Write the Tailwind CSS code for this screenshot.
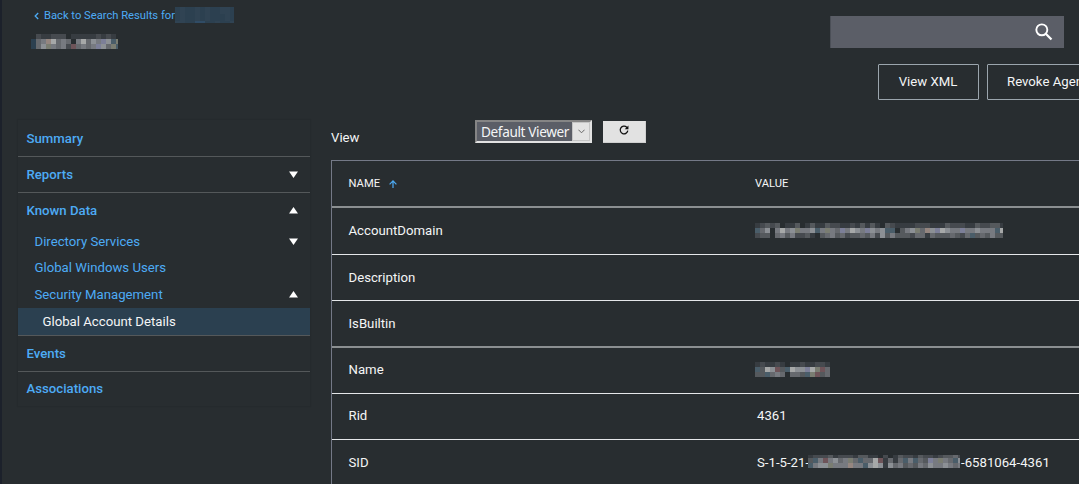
<!DOCTYPE html>
<html lang="en">
<head>
<meta charset="utf-8">
<title>Global Account Details</title>
<script src="https://cdn.jsdelivr.net/npm/@tailwindcss/browser@4"></script>
</head>
<body class="h-[484px] overflow-hidden border-l-2 border-[#1c212b] bg-[#282d30] font-['Roboto',sans-serif] text-[13.2px] leading-4 text-[#f4f5f6]">
<header class="flex h-[120px] justify-between">
  <div class="pt-[7px]">
    <div class="flex h-4 items-center pl-8 text-[11.2px] text-[#4dabf5]">
      <svg class="mt-0.5 mr-[5px] block h-2 w-[5px]" viewBox="0 0 5 8" fill="none" stroke="currentColor" stroke-width="1.3"><path d="M4.2 1 1.2 4l3 3"/></svg>
      <a class="w-[131px] pt-px whitespace-nowrap">Back to Search Results for</a>
      <svg class="block h-4 w-[59px]" data-cells="cdccdcdccddc/cdccdcdcccdc/ddcceeccdccd" data-sizes="7,7,2"></svg>
    </div>
    <svg class="mt-[11px] ml-[29px] block h-[15px] w-[87px]" data-cells="021122201111121210/c45o7454057465p6bgbr/c46g5452r4545p64gb6r" data-sizes="5,5,5"></svg>
  </div>
  <div class="flex w-[249px] flex-col pt-4">
    <div class="flex h-8 w-[234px] shrink-0 items-center justify-end border-l border-[#4b4f57] bg-[#5b5e67] pr-[11px]">
      <svg class="block size-[18px]" viewBox="0 0 19 19" fill="none" stroke="#fff" stroke-width="2"><circle cx="7.2" cy="7.2" r="5.8"/><path d="m11.4 11.4 6 6" stroke-width="2.4"/></svg>
    </div>
    <div class="mt-4 ml-12 flex gap-2 whitespace-nowrap">
      <button class="h-9 w-[101px] shrink-0 rounded-[1px] border border-[#9ba5ad] pr-px">View XML</button>
      <button class="h-9 w-[140px] shrink-0 rounded-[1px] border border-[#9ba5ad] pl-[19px] text-left">Revoke Agent</button>
    </div>
  </div>
</header>
<main class="flex h-[364px]">
  <nav class="ml-4 h-[286px] w-[292px] shrink-0 text-[#4dabf5] shadow-[0_0_1px_1px_rgba(0,0,0,0.06)]">
    <div class="flex h-[37px] items-center border-b border-[#54585a] px-[8.5px] pt-px font-medium">Summary</div>
    <div class="flex h-9 items-center justify-between border-b border-[#54585a] pr-3 pl-[8.5px] font-medium">Reports<svg class="mb-px h-[7px] w-[9px] text-white" viewBox="0 0 9 7" fill="currentColor"><path d="M0 .5h9L4.5 7z"/></svg></div>
    <div class="flex h-[35px] items-center justify-between pr-3 pl-[8.5px] font-medium">Known Data<svg class="h-[7px] w-[9px] text-white" viewBox="0 0 9 7" fill="currentColor"><path d="M0 6.5h9L4.5 0z"/></svg></div>
    <div class="flex h-[27px] items-center justify-between pr-3 pl-[16.5px]">Directory Services<svg class="mb-px h-[7px] w-[9px] text-white" viewBox="0 0 9 7" fill="currentColor"><path d="M0 .5h9L4.5 7z"/></svg></div>
    <div class="flex h-[26px] items-center pl-[16.5px]">Global Windows Users</div>
    <div class="flex h-[27px] items-center justify-between pr-3 pl-[16.5px]">Security Management<svg class="h-[7px] w-[9px] text-white" viewBox="0 0 9 7" fill="currentColor"><path d="M0 6.5h9L4.5 0z"/></svg></div>
    <div class="flex h-7 items-center border-b border-[#54585a] bg-[#2b4050] pl-[24.5px] text-[#f4f5f6]">Global Account Details</div>
    <div class="flex h-9 items-center border-b border-[#54585a] px-[8.5px] font-medium">Events</div>
    <div class="flex h-[34px] items-center px-[8.5px] font-medium">Associations</div>
  </nav>
  <section class="ml-[21px] min-w-0 flex-1">
    <div class="flex h-10">
      <div class="mt-[10px] w-36">View</div>
      <div class="flex h-[23px] w-[117px] border-2 border-t-[#858585] border-r-[#e2e2e2] border-b-[#e2e2e2] border-l-[#858585] bg-[#5b5e67] font-['Noto_Sans',sans-serif]">
        <div class="flex-1 pl-1 text-[13.6px] leading-[19px] tracking-[-0.37px] whitespace-nowrap">Default Viewer</div>
        <div class="flex w-[18px] items-center justify-center border border-[#c5c5c5] bg-[#e3e3e3]"><svg class="h-[5px] w-[7px]" viewBox="0 0 7 5" fill="none" stroke="#666"><path d="m.4.7 3.1 3.1L6.6.7"/></svg></div>
      </div>
      <button class="mt-px ml-[11px] flex h-[22px] w-[43px] justify-center border-r border-b border-[#cfcfcf] bg-[#e2e2e2] pt-1"><svg class="size-[10px]" viewBox="0 0 11 11" fill="none" stroke="#111" stroke-width="1.4"><path d="M9.7 6.3A4.2 4.2 0 1 1 8.5 2.5l1 .9"/><path d="M10.4.5v4.1H6.3z" fill="#111" stroke="none"/></svg></button>
    </div>
    <div class="grid w-[760px] grid-cols-[423px_1fr] border-t border-l border-[#747987]">
      <div class="col-span-2 grid h-[47px] grid-cols-subgrid items-center border-b-2 border-[#8b8f91] pl-[16.5px] text-[11.2px]">
        <div class="flex items-center"><span class="w-10">NAME</span><svg class="h-2 w-[8px]" viewBox="0 0 8 8" fill="none" stroke="#4dabf5" stroke-width="1.2"><path d="M4 8V1M.6 4.3 4 .9l3.4 3.4"/></svg></div>
        <div>VALUE</div>
      </div>
      <div class="col-span-2 grid h-[47px] grid-cols-subgrid items-center border-b border-[#e5e7e9] pl-[16.5px]"><div>AccountDomain</div>
        <svg class="mb-px block h-[15px] w-[248px]" data-cells="12323011301311322112131310321111222111322211322331/b4605756g556b5g54p5765p656bb0356g4o6p7655p556555b7o/2330453522310345342334352635333244143334324b343533" data-sizes="5,5,5"></svg></div>
      <div class="col-span-2 grid h-[46px] grid-cols-subgrid items-center border-b border-[#e5e7e9] pl-[16.5px]"><div>Description</div></div>
      <div class="col-span-2 grid h-[47px] grid-cols-subgrid items-center border-b-2 border-[#8b8f91] pl-[16.5px]"><div>IsBuiltin</div></div>
      <div class="col-span-2 grid h-[46px] grid-cols-subgrid items-center border-b border-[#e5e7e9] pb-[2px] pl-[16.5px]"><div>Name</div>
        <svg class="block h-[15px] w-[75px]" data-cells="121121011211221/b376r3b766p7gr4/33b4540443bgr34" data-sizes="5,5,5"></svg></div>
      <div class="col-span-2 grid h-[46px] grid-cols-subgrid items-center border-b border-[#e5e7e9] pb-px pl-[16.5px]"><div>Rid</div><div class="pl-[2px]">4361</div></div>
      <div class="col-span-2 grid h-[46px] grid-cols-subgrid items-center pb-px pl-[16.5px]"><div>SID</div>
        <div class="flex items-center pl-[2px] whitespace-nowrap"><span class="w-[51px]">S-1-5-21-</span><svg class="mb-0.5 block h-[13px] w-[152px]" data-cells="1222312221331102013221322123342/3b5r5645g4b447r1414b5b43p5g54b6/b566g555o55b6761645343546556545" data-sizes="3,5,5"></svg><span class="pl-px">-6581064-4361</span></div></div>
    </div>
  </section>
</main>
<script>
// Redacted values: each character is one cell of a mosaic.
const shades = {0:'#282d30',1:'#373c41',2:'#464a4f',3:'#55595d',4:'#66696e',5:'#777a80',6:'#8c9095',7:'#a6a8a8',r:'#6e5459',b:'#4a5d69',g:'#7a7d72',p:'#7c7f98',o:'#958680',c:'#2c4050',d:'#304353',e:'#304c66'};
document.querySelectorAll('svg[data-cells]').forEach(s => {
  const sizes = s.dataset.sizes.split(',').map(Number);
  let y = 0, out = '';
  s.dataset.cells.split('/').forEach((row, r) => {
    [...row].forEach((c, i) => out += `<rect x="${i*5}" y="${y}" width="5" height="${sizes[r]}" fill="${shades[c]}"/>`);
    y += sizes[r];
  });
  s.setAttribute('shape-rendering', 'crispEdges');
  s.innerHTML = out;
});
</script>
</body>
</html>
